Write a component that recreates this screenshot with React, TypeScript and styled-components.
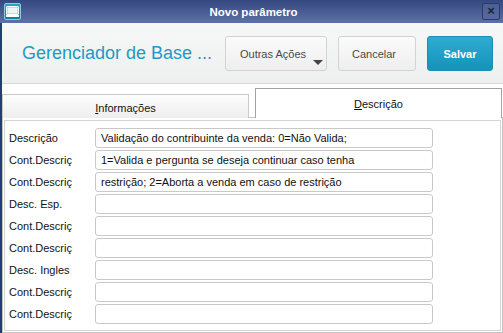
import styled, { createGlobalStyle } from "styled-components";

const GlobalStyle = createGlobalStyle`
  html, body {
    margin: 0;
    padding: 0;
    background: #ffffff;
  }
  body {
    font-family: "Liberation Sans", Arial, sans-serif;
  }
`;

const fields: { label: string; value: string }[] = [
  { label: "Descrição", value: "Validação do contribuinte da venda: 0=Não Valida;" },
  { label: "Cont.Descriç", value: "1=Valida e pergunta se deseja continuar caso tenha" },
  { label: "Cont.Descriç", value: "restrição; 2=Aborta a venda em caso de restrição" },
  { label: "Desc. Esp.", value: "" },
  { label: "Cont.Descriç", value: "" },
  { label: "Cont.Descriç", value: "" },
  { label: "Desc. Ingles", value: "" },
  { label: "Cont.Descriç", value: "" },
  { label: "Cont.Descriç", value: "" },
];

export default function App() {
  return (
    <>
      <GlobalStyle />
      <Window>
        <TitleBar>
          <AppIcon>
            <svg width="13" height="11" viewBox="0 0 13 11">
              <rect x="0.5" y="0.5" width="12" height="8" rx="0.5" fill="#7fd0e6" stroke="#ffffff" />
              <rect x="1.5" y="1.5" width="10" height="6" fill="#e9f7fb" />
              <rect x="0" y="9" width="13" height="2" fill="#ffffff" />
            </svg>
          </AppIcon>
          <Title>Novo parâmetro</Title>
          <CloseButton>×</CloseButton>
        </TitleBar>

        <Content>
          <Header>
            <PageTitle>Gerenciador de Base ...</PageTitle>
            <Actions>
              <Button $width={102}>
                Outras Ações
                <Caret />
              </Button>
              <Button $width={78}>Cancelar</Button>
              <Button $width={66} $primary>
                Salvar
              </Button>
            </Actions>
          </Header>

          <Body>
            <TabStrip>
              <Tab>
                <u>I</u>nformações
              </Tab>
              <Tab $active>
                <u>D</u>escrição
              </Tab>
            </TabStrip>
            <Panel>
              <Form>
                {fields.map((f, i) => (
                  <Row key={i}>
                    <Label>{f.label}</Label>
                    <Field>{f.value}</Field>
                  </Row>
                ))}
              </Form>
            </Panel>
          </Body>
        </Content>
      </Window>
    </>
  );
}

const Window = styled.div`
  width: 503px;
  height: 333px;
  display: flex;
  flex-direction: column;
  overflow: hidden;
`;

const TitleBar = styled.div`
  height: 23px;
  flex: none;
  display: flex;
  align-items: center;
  padding: 0 3px 0 4px;
  box-sizing: border-box;
  background: linear-gradient(#34477f, #5d70a7);
`;

const AppIcon = styled.div`
  width: 17px;
  height: 17px;
  box-sizing: border-box;
  border: 1px solid #8fc9dc;
  border-radius: 2px;
  background: linear-gradient(#2aa5c6, #167c9e);
  display: flex;
  align-items: center;
  justify-content: center;
`;

const Title = styled.div`
  flex: 1;
  text-align: center;
  color: #ffffff;
  font-weight: bold;
  font-size: 11.5px;
  padding-left: 4px;
`;

const CloseButton = styled.div`
  width: 18px;
  height: 17px;
  box-sizing: border-box;
  border: 1px solid #2c3b66;
  border-radius: 2px;
  background: linear-gradient(#4b5e95, #5669a0);
  color: #1c2233;
  font-weight: bold;
  font-size: 13px;
  line-height: 14px;
  text-align: center;
`;

const Content = styled.div`
  flex: 1;
  display: flex;
  flex-direction: column;
  border-left: 2px solid #1f3d78;
`;

const Header = styled.div`
  height: 60px;
  flex: none;
  display: flex;
  align-items: center;
  padding: 0 10px 0 20px;
  border-bottom: 1px solid #d6d8d9;
  background: linear-gradient(#f6f7f7, #eeefef);
`;

const PageTitle = styled.div`
  flex: 1;
  font-size: 18px;
  color: #1b9ac4;
  padding-top: 1px;
`;

const Actions = styled.div`
  display: flex;
  gap: 11px;
  padding-top: 1px;
`;

const Button = styled.div<{ $width: number; $primary?: boolean }>`
  position: relative;
  width: ${(p) => p.$width}px;
  height: 35px;
  box-sizing: border-box;
  display: flex;
  align-items: center;
  justify-content: center;
  border-radius: 3px;
  font-size: 11px;
  border: 1px solid ${(p) => (p.$primary ? "#1a8fb6" : "#d2d3d4")};
  background: ${(p) =>
    p.$primary
      ? "linear-gradient(#2eabd0, #1493bb)"
      : "linear-gradient(#fbfbfb, #eeeeee)"};
  color: ${(p) => (p.$primary ? "#ffffff" : "#4a4a4a")};
  font-weight: ${(p) => (p.$primary ? "bold" : "normal")};
  padding-right: ${(p) => (p.$primary ? 0 : 6)}px;
`;

const Caret = styled.span`
  position: absolute;
  right: 3px;
  bottom: 5px;
  width: 0;
  height: 0;
  border-left: 5px solid transparent;
  border-right: 5px solid transparent;
  border-top: 5px solid #444444;
`;

const Body = styled.div`
  flex: 1;
  display: flex;
  flex-direction: column;
  background: #ffffff;
`;

const TabStrip = styled.div`
  height: 34px;
  flex: none;
  display: flex;
  align-items: flex-end;
  gap: 6px;
  margin-bottom: -1px;
  position: relative;
  z-index: 1;
`;

const Tab = styled.div<{ $active?: boolean }>`
  width: 247px;
  height: ${(p) => (p.$active ? 30 : 24)}px;
  box-sizing: border-box;
  border: 1px solid ${(p) => (p.$active ? "#a2a2a2" : "#c9c9c9")};
  border-bottom: none;
  background: ${(p) =>
    p.$active ? "#ffffff" : "linear-gradient(#fdfdfd, #eeeeee)"};
  font-size: 11px;
  color: #111111;
  display: flex;
  justify-content: center;
  align-items: ${(p) => (p.$active ? "flex-start" : "center")};
  padding-top: ${(p) => (p.$active ? 9 : 3)}px;

  u {
    text-decoration-thickness: 1px;
  }
`;

const Panel = styled.div`
  flex: 1;
  box-sizing: border-box;
  border: 1px solid #c3c3c3;
  padding: 2px 1px 1px 1px;
  background: #ffffff;
`;

const Form = styled.div`
  height: 100%;
  box-sizing: border-box;
  border: 1px solid #d4d4d4;
  padding: 7px 0 0 4px;
  display: flex;
  flex-direction: column;
  gap: 2px;
`;

const Row = styled.div`
  display: grid;
  grid-template-columns: 86px 338px;
  align-items: center;
  height: 20px;
`;

const Label = styled.div`
  font-size: 11px;
  color: #111111;
`;

const Field = styled.div`
  height: 20px;
  box-sizing: border-box;
  border: 1px solid #c9c9c9;
  border-radius: 3px;
  padding: 0 5px;
  font-size: 11px;
  line-height: 18px;
  color: #111111;
  white-space: nowrap;
  overflow: hidden;
`;
